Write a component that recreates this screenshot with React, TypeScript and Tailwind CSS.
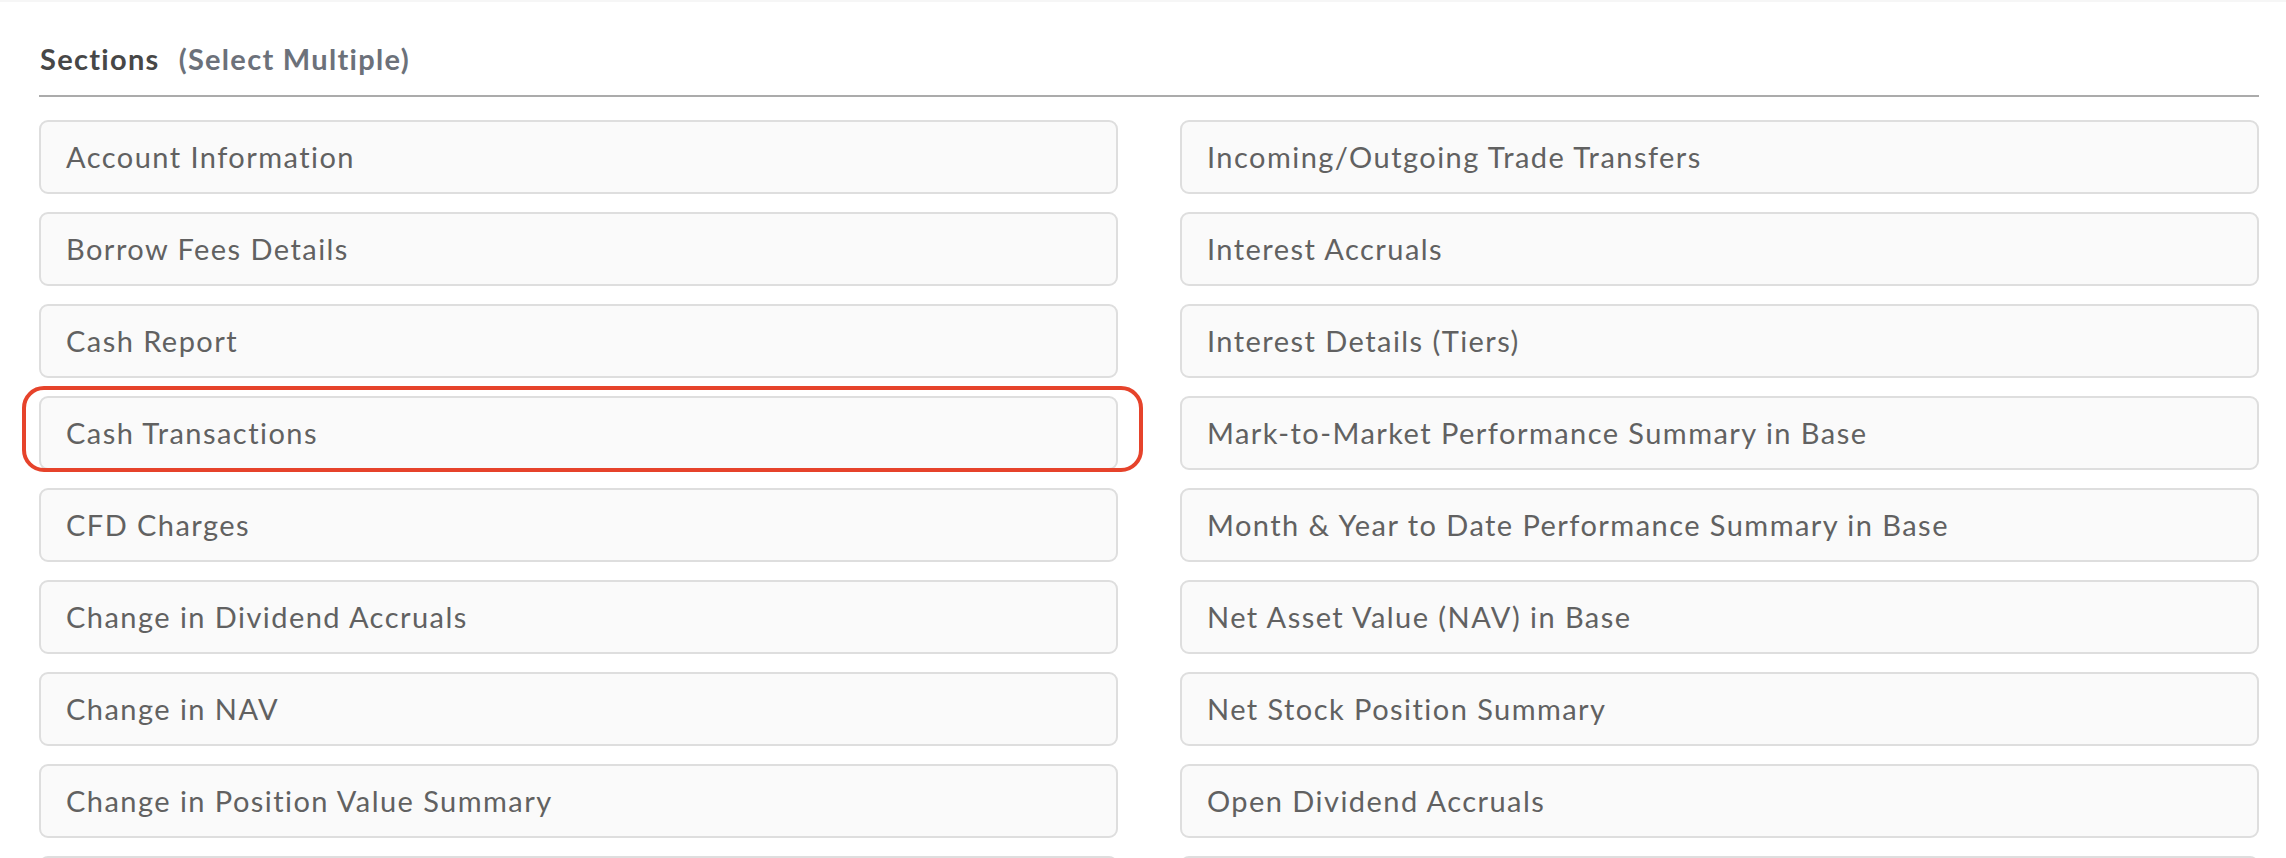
import React from 'react';

const leftItems = [
  'Account Information',
  'Borrow Fees Details',
  'Cash Report',
  'Cash Transactions',
  'CFD Charges',
  'Change in Dividend Accruals',
  'Change in NAV',
  'Change in Position Value Summary',
  'Change in Position Value',
];

const rightItems = [
  'Incoming/Outgoing Trade Transfers',
  'Interest Accruals',
  'Interest Details (Tiers)',
  'Mark-to-Market Performance Summary in Base',
  'Month & Year to Date Performance Summary in Base',
  'Net Asset Value (NAV) in Base',
  'Net Stock Position Summary',
  'Open Dividend Accruals',
  'Open Positions',
];

const highlighted = 'Cash Transactions';

const SectionButton: React.FC<{ label: string }> = ({ label }) => (
  <div className="relative">
    <button className="w-full h-[74px] flex items-center pl-[25px] text-left bg-[#fafafa] border-2 border-[#dedede] rounded-[9px] text-[#616161] text-[29px] tracking-[1.45px]">
      {label}
    </button>
    {label === highlighted && (
      <div className="absolute -left-[17px] -right-[25px] -top-[10px] -bottom-[2px] border-[4px] border-[#e6432b] rounded-[22px] pointer-events-none" />
    )}
  </div>
);

export default function App() {
  const rows = leftItems.map((l, i) => [l, rightItems[i]]);
  return (
    <div
      className="w-[2286px] h-[858px] overflow-hidden bg-white border-t-2 border-[#f6f6f6]"
      style={{ fontFamily: 'Lato, "Open Sans", sans-serif' }}
    >
      <div className="pl-[39px] pr-[27px] pt-[35px]">
        {/* Header */}
        <div className="flex items-baseline gap-[19px] pl-[1px] pb-[14px] border-b-2 border-[#ababab]">
          <span className="text-[29px] font-bold tracking-[1.3px] text-[#474747]">Sections</span>
          <span className="text-[29px] font-bold tracking-[1.3px] text-[#6c717a]">(Select Multiple)</span>
        </div>

        {/* Options */}
        <div className="grid grid-cols-2 gap-x-[62px] gap-y-[18px] mt-[23px]">
          {rows.map(([l, r]) => (
            <React.Fragment key={l}>
              <SectionButton label={l} />
              <SectionButton label={r} />
            </React.Fragment>
          ))}
        </div>
      </div>
    </div>
  );
}
